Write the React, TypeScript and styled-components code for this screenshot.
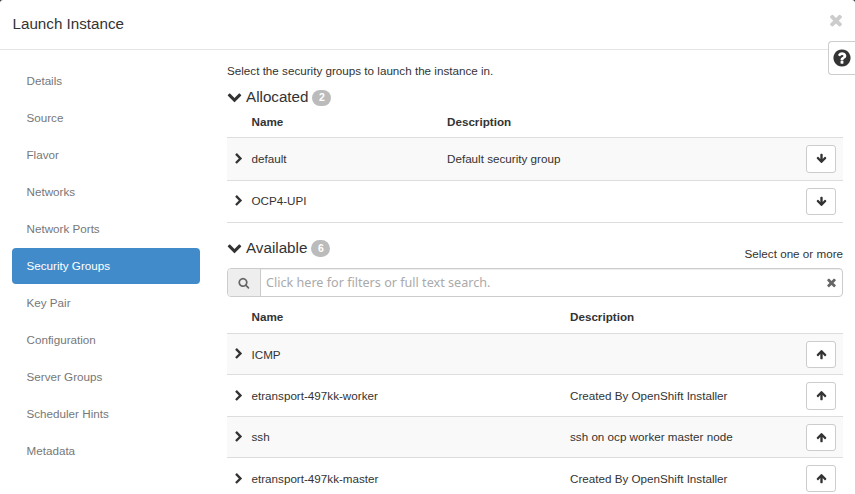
import React from "react";
import styled, { createGlobalStyle } from "styled-components";

const GlobalStyle = createGlobalStyle`
  * { box-sizing: border-box; }
  html, body { margin: 0; padding: 0; overflow: hidden; background: #333; }
  body {
    font-family: "Liberation Sans", Arial, sans-serif;
    font-size: 11.66px;
    line-height: 17px;
    color: #333;
  }
`;

const paths = {
  chevronDown:
    "M1683 808l-742 741q-19 19-45 19t-45-19l-742-741q-19-19-19-45.5t19-45.5l166-165q19-19 45-19t45 19l531 531 531-531q19-19 45-19t45 19l166 165q19 19 19 45.5t-19 45.5z",
  chevronRight:
    "M1363 877l-742 742q-19 19-45 19t-45-19l-166-166q-19-19-19-45t19-45l531-531-531-531q-19-19-19-45t19-45l166-166q19-19 45-19t45 19l742 742q19 19 19 45t-19 45z",
  times:
    "M1490 1322q0 40-28 68l-136 136q-28 28-68 28t-68-28l-294-294-294 294q-28 28-68 28t-68-28l-136-136q-28-28-28-68t28-68l294-294-294-294q-28-28-28-68t28-68l136-136q28-28 68-28t68 28l294 294 294-294q28-28 68-28t68 28l136 136q28 28 28 68t-28 68l-294 294 294 294q28 28 28 68z",
  question:
    "M1024 1376v-192q0-14-9-23t-23-9h-192q-14 0-23 9t-9 23v192q0 14 9 23t23 9h192q14 0 23-9t9-23zm256-672q0-88-55.5-163t-138.5-116-170-41q-243 0-371 213-15 24 8 42l132 100q7 6 19 6 16 0 25-12 53-68 86-92 34-24 86-24 48 0 85.5 26t37.5 59q0 38-20 61t-68 45q-63 28-115.5 86.5t-52.5 125.5v36q0 14 9 23t23 9h192q14 0 23-9t9-23q0-19 21.5-49.5t54.5-49.5q32-18 49-28.5t46-35 44.5-48 28-60.5 12.5-81zm384 192q0 209-103 385.5t-279.5 279.5-385.5 103-385.5-103-279.5-279.5-103-385.5 103-385.5 279.5-279.5 385.5-103 385.5 103 279.5 279.5 103 385.5z",
  search:
    "M1216 832q0-185-131.5-316.5t-316.5-131.5-316.5 131.5-131.5 316.5 131.5 316.5 316.5 131.5 316.5-131.5 131.5-316.5zm512 832q0 52-38 90t-90 38q-54 0-90-38l-343-342q-179 124-399 124-143 0-273.5-55.5t-225-150-150-225-55.5-273.5 55.5-273.5 150-225 225-150 273.5-55.5 273.5 55.5 225 150 150 225 55.5 273.5q0 220-124 399l343 343q37 37 37 90z",
  arrowDown:
    "M1675 832q0 53-37 90l-651 652q-39 37-91 37-53 0-90-37l-651-652q-38-36-38-90 0-53 38-91l74-75q39-37 91-37 53 0 90 37l294 294v-704q0-52 38-90t90-38h128q52 0 90 38t38 90v704l294-294q37-37 90-37 52 0 91 37l75 75q37 39 37 91z",
};

const Svg = styled.svg<{ $size: number; $flip?: boolean }>`
  display: block;
  flex: none;
  width: ${(p) => p.$size}px;
  height: ${(p) => p.$size}px;
  fill: currentColor;
  transform: ${(p) => (p.$flip ? "rotate(180deg)" : "none")};
`;

function Icon({ name, size, flip }: { name: keyof typeof paths; size: number; flip?: boolean }) {
  return (
    <Svg $size={size} $flip={flip} viewBox="0 0 1792 1792" aria-hidden="true">
      <path d={paths[name]} />
    </Svg>
  );
}

const Modal = styled.div`
  position: relative;
  width: 855px;
  height: 494px;
  overflow: hidden;
  border-radius: 3px 3px 0 0;
  background: #fff;
`;

const Header = styled.header`
  display: flex;
  justify-content: space-between;
  align-items: flex-start;
  height: 50px;
  padding: 11px 10px 0 12.5px;
  border-bottom: 1px solid #e5e5e5;
`;

const Title = styled.h1`
  margin: 1px 0 0;
  font-size: 15.2px;
  font-weight: 400;
  line-height: 23px;
`;

const CloseButton = styled.button`
  padding: 0;
  border: 0;
  background: none;
  color: #ccc;
`;

const HelpButton = styled.button`
  position: absolute;
  top: 41px;
  right: 0;
  display: flex;
  align-items: center;
  width: 27px;
  height: 34px;
  padding: 0 0 1px 3px;
  border: 1px solid #ccc;
  border-right: 0;
  border-radius: 4px 0 0 4px;
  background: #fff;
  color: #333;
`;

const Body = styled.div`
  display: flex;
  gap: 27px;
  padding: 12px 12px 0;
`;

const Nav = styled.nav`
  display: flex;
  flex-direction: column;
  gap: 1px;
  width: 188px;
  flex: none;
  margin-top: 1px;
`;

const NavItem = styled.a<{ $active?: boolean }>`
  display: flex;
  align-items: center;
  height: 36px;
  padding: 0 0 2px 14.5px;
  border-radius: 4px;
  color: ${(p) => (p.$active ? "#fff" : "#777")};
  background: ${(p) => (p.$active ? "#428bca" : "transparent")};
`;

const Content = styled.main`
  width: 616px;
`;

const Intro = styled.p`
  margin: 0;
`;

const SectionHeader = styled.div<{ $top: number }>`
  display: flex;
  align-items: center;
  height: 22px;
  margin-top: ${(p) => p.$top}px;
`;

const SectionIcon = styled.span`
  margin-bottom: 1px;
`;

const SectionTitle = styled.h2`
  margin: 0 4px 0 4px;
  font-size: 15.2px;
  font-weight: 400;
  line-height: 20px;
`;

const Badge = styled.span<{ $height: number }>`
  width: 19px;
  height: ${(p) => p.$height}px;
  margin-top: ${(p) => 18 - p.$height}px;
  border-radius: 9px;
  background: #bbb;
  color: #fff;
  font-size: 10.5px;
  font-weight: 700;
  line-height: ${(p) => p.$height - 1}px;
  text-align: center;
`;

const Hint = styled.span`
  margin: 10px 0 0 auto;
`;

const SearchBar = styled.div`
  display: flex;
  height: 29px;
  margin-top: 9px;
  border: 1px solid #ccc;
  border-radius: 4px;
  overflow: hidden;
`;

const SearchAddon = styled.div`
  display: flex;
  align-items: center;
  justify-content: center;
  width: 33px;
  padding-top: 1px;
  border-right: 1px solid #ccc;
  background: #eee;
  color: #666;
`;

const SearchField = styled.div`
  display: flex;
  flex: 1;
  align-items: center;
  justify-content: space-between;
  padding: 0 4px 0 5px;
  box-shadow: inset 0 1px 1px rgba(0, 0, 0, 0.075);
  color: #aaa;
  font-family: "Noto Sans", sans-serif;
  font-size: 12.6px;
`;

const ClearIcon = styled.span`
  color: #666;
`;

const Row = styled.div<{ $desc: number; $height: number; $shaded?: boolean }>`
  display: grid;
  grid-template-columns: 24.5px ${(p) => p.$desc - 24.5}px 1fr 37px;
  align-items: center;
  height: ${(p) => p.$height}px;
  border-bottom: 1px solid #ddd;
  background: ${(p) => (p.$shaded ? "#f9f9f9" : "#fff")};
`;

const HeadRow = styled(Row)<{ $top: number; $bottom: number }>`
  padding: ${(p) => p.$top}px 0 ${(p) => p.$bottom}px;
  font-weight: 700;
`;

const Cell = styled.span<{ $lift: number }>`
  padding-bottom: ${(p) => p.$lift}px;
`;

const Expander = styled.span<{ $lift: number }>`
  padding: 0 0 ${(p) => p.$lift}px 5.8px;
`;

const MoveButton = styled.button<{ $height: number; $up?: boolean }>`
  display: flex;
  align-items: center;
  justify-content: center;
  width: 30px;
  height: ${(p) => p.$height}px;
  padding: ${(p) => (p.$up ? "0" : "0 0 1px")};
  border: 1px solid #ccc;
  border-radius: 3px;
  background: #fff;
  color: #333;
`;

type Group = { name: string; description?: string; height: number; button: number; lift?: number };

const navItems = [
  "Details",
  "Source",
  "Flavor",
  "Networks",
  "Network Ports",
  "Security Groups",
  "Key Pair",
  "Configuration",
  "Server Groups",
  "Scheduler Hints",
  "Metadata",
];

const allocated: Group[] = [
  { name: "default", description: "Default security group", height: 43, button: 28, lift: 2 },
  { name: "OCP4-UPI", height: 42, button: 27, lift: 2 },
];

const available: Group[] = [
  { name: "ICMP", height: 41, button: 27 },
  { name: "etransport-497kk-worker", description: "Created By OpenShift Installer", height: 42, button: 28 },
  { name: "ssh", description: "ssh on ocp worker master node", height: 41, button: 27, lift: 2 },
  { name: "etransport-497kk-master", description: "Created By OpenShift Installer", height: 42, button: 27 },
];

type TableProps = {
  rows: Group[];
  desc: number;
  head: number;
  headTop?: number;
  headBottom?: number;
  up?: boolean;
};

function GroupTable({ rows, desc, head, headTop = 0, headBottom = 0, up }: TableProps) {
  return (
    <div>
      <HeadRow $desc={desc} $height={head} $top={headTop} $bottom={headBottom}>
        <span />
        <span>Name</span>
        <span>Description</span>
      </HeadRow>
      {rows.map((row, i) => (
        <Row key={row.name} $desc={desc} $height={row.height} $shaded={i % 2 === 0}>
          <Expander $lift={up ? 0 : 1}>
            <Icon name="chevronRight" size={11.7} />
          </Expander>
          <Cell $lift={row.lift ?? 0}>{row.name}</Cell>
          <Cell $lift={row.lift ?? 0}>{row.description}</Cell>
          <MoveButton $height={row.button} $up={up}>
            <Icon name="arrowDown" size={11} flip={up} />
          </MoveButton>
        </Row>
      ))}
    </div>
  );
}

export default function App() {
  return (
    <>
      <GlobalStyle />
      <Modal>
        <Header>
          <Title>Launch Instance</Title>
          <CloseButton aria-label="Close">
            <Icon name="times" size={18} />
          </CloseButton>
        </Header>
        <HelpButton aria-label="Help">
          <Icon name="question" size={20} />
        </HelpButton>
        <Body>
          <Nav>
            {navItems.map((item) => (
              <NavItem key={item} $active={item === "Security Groups"}>
                {item}
              </NavItem>
            ))}
          </Nav>
          <Content>
            <Intro>Select the security groups to launch the instance in.</Intro>
            <SectionHeader $top={7}>
              <SectionIcon>
                <Icon name="chevronDown" size={15} />
              </SectionIcon>
              <SectionTitle>Allocated</SectionTitle>
              <Badge $height={16}>2</Badge>
            </SectionHeader>
            <GroupTable rows={allocated} desc={220} head={30} headBottom={2} />
            <SectionHeader $top={14}>
              <SectionIcon>
                <Icon name="chevronDown" size={15} />
              </SectionIcon>
              <SectionTitle>Available</SectionTitle>
              <Badge $height={17}>6</Badge>
              <Hint>Select one or more</Hint>
            </SectionHeader>
            <SearchBar>
              <SearchAddon>
                <Icon name="search" size={11.7} />
              </SearchAddon>
              <SearchField>
                <span>Click here for filters or full text search.</span>
                <ClearIcon>
                  <Icon name="times" size={13} />
                </ClearIcon>
              </SearchField>
            </SearchBar>
            <GroupTable rows={available} desc={343} head={37} headTop={2} up />
          </Content>
        </Body>
      </Modal>
    </>
  );
}
